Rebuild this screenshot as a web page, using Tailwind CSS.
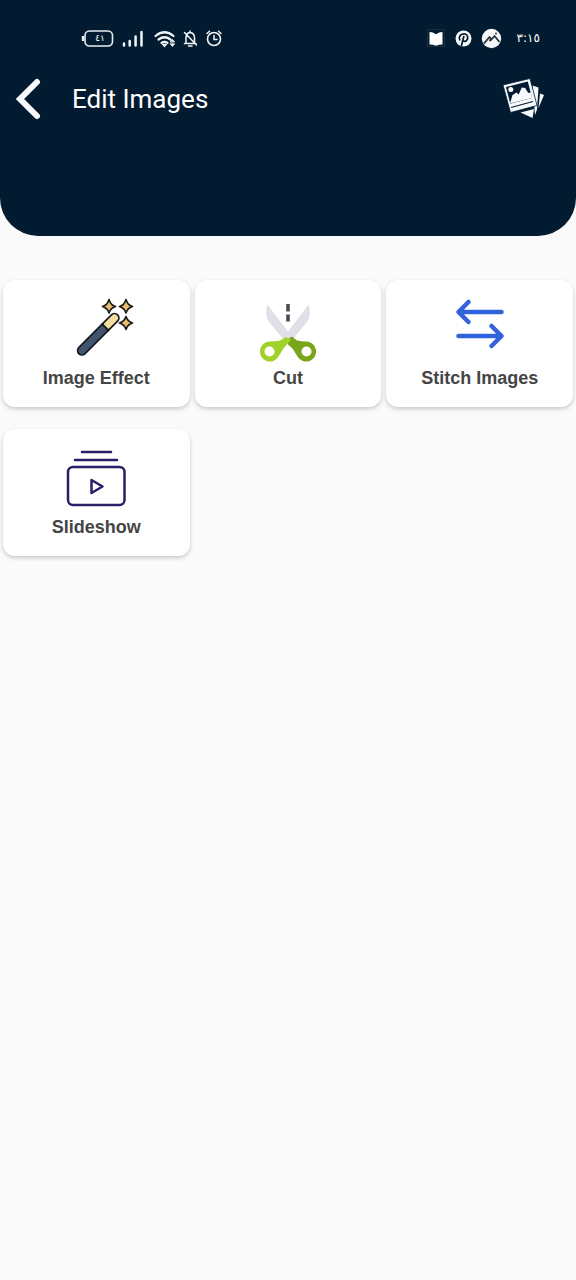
<!DOCTYPE html>
<html lang="en">
<head>
<meta charset="utf-8">
<meta name="viewport" content="width=device-width, initial-scale=1">
<title>Edit Images</title>
<script src="https://cdn.jsdelivr.net/npm/@tailwindcss/browser@4"></script>
</head>
<body class="min-h-screen bg-[#fafafa] font-['Liberation_Sans',sans-serif]">
<header class="rounded-b-[38px] bg-[#031b30] pt-6 pb-[113px] text-white">
  <div class="flex h-7 items-center justify-between pr-9 pl-20" aria-label="Status bar">
    <div class="flex items-center">
      <div class="relative h-7 w-9">
        <svg class="h-7 w-9" viewBox="80 24 36 28" fill="none"><rect x="85" y="31" width="27.500" height="15" rx="4.500" stroke="#e8eef2" stroke-width="1.600"/><path d="M83 36v5" stroke="#e8eef2" stroke-width="2.400"/></svg>
        <span class="absolute inset-0 flex items-center justify-center pl-1 font-['DejaVu_Sans',sans-serif] text-[9px] leading-none">٤١</span>
      </div>
      <svg class="h-7 w-28" viewBox="116 24 112 28" fill="none" stroke="#f1f5f7" stroke-linecap="round">
        <path d="M124 43.500v2M129.700 41v4.500M135.600 36.500v9M141.500 32v13.500" stroke-width="2.500"/>
        <path d="M155.500 36q9-7.500 18 0M158.500 39.500q6-4.500 12 0M161.500 42.800q3-2 6 0" stroke-width="2.200"/>
        <path d="M163 44.500h3l-1.500 1.800z" fill="#f1f5f7" stroke-width="1.500"/>
        <path d="M170.400 41.800l2-2.500 2 2.500zM170.400 44l2 2.500 2-2.500z" fill="#f1f5f7" stroke-width=".8"/>
        <path d="M184.500 43.500h11.500M186 43v-5q0-5 4-5.500 4.500.5 4.500 5.500v5M190 32v-1M188.500 46h3.500M184.500 32.500l12 12.500" stroke-width="1.500"/>
        <circle cx="214" cy="39" r="6.500" stroke-width="1.600"/><path d="M214 35.500V39.500h3M207 33.500l2.500-2.300M221 33.500l-2.500-2.300" stroke-width="1.500"/>
      </svg>
    </div>
    <div class="flex items-center gap-2">
      <svg class="h-7 w-20" viewBox="424 24 80 28" fill="none">
        <rect x="427.500" y="29.500" width="17" height="17" stroke="#1c2c3b"/><path d="M429.500 32q3.500 0 6.500 2.200 3-2.200 6.500-2.200v12.500q-3.500 0-6.500 1.200-3-1.200-6.500-1.200z" fill="#fff"/>
        <circle cx="463.500" cy="38.500" r="8" fill="#f6f8fa"/><path d="M459.800 39.800c-2.600-5.300 5.900-8.300 7.700-3.600.9 3.100-1.800 6.600-4 4.600M463.800 36.500l-2.300 9" stroke="#031b30" stroke-width="1.700" stroke-linecap="round"/>
        <circle cx="491.500" cy="38.500" r="9.700" fill="#f6f8fa"/><path d="M484 43.500l5.500-6.500 2 2.500 3-3.500 5 6M489.500 41l2-2" stroke="#26343f" stroke-width="1.900" stroke-linejoin="round"/><circle cx="496" cy="33.500" r="1" fill="#26343f"/>
      </svg>
      <time class="w-7 text-right font-['DejaVu_Sans',sans-serif] text-[12px] leading-4">٣:١٥</time>
    </div>
  </div>
  <div class="mt-[23px] flex h-12 items-center pr-7">
    <button type="button" aria-label="Back" class="h-12 w-[72px] shrink-0">
      <svg class="h-12 w-12" viewBox="0 75 48 48" fill="none"><path d="M37 82L20 99l17 17" stroke="#f7fafc" stroke-width="6" stroke-linecap="round" stroke-linejoin="miter"/></svg>
    </button>
    <h1 class="grow font-[Roboto,sans-serif] text-[26px] leading-8 font-normal">Edit Images</h1>
    <button type="button" aria-label="Gallery" class="h-12 w-12 shrink-0">
      <svg class="h-12 w-12" viewBox="500 75 48 48" fill="none">
        <path d="M520.500 112.500l13.500-3.500-1.500 9z" fill="#f7fafc"/>
        <path d="M532.500 85.500l6 2-1.500 22-2 5.500z" fill="#f7fafc"/>
        <path d="M540 93.500l4 1.500-5.500 13z" fill="#f7fafc"/>
        <path d="M503 85L530 78.500l7 27-26.500 7z" fill="#f7fafc" stroke="#031b30" stroke-width=".8"/>
        <path d="M506 87l21.800-5.500 4.300 16.500-21.800 5.800z" fill="#031b30"/>
        <circle cx="510.800" cy="89.500" r="2.500" fill="#f7fafc"/>
        <path d="M510 103.500l2.500-8.500 4-2.500 2.200 2 3-7 3.500.5 3 5 2.500-.5 1.500 5.500z" fill="#f7fafc"/>
        <path d="M511 107.500l22-6" stroke="#031b30" stroke-width="1.200"/>
      </svg>
    </button>
  </div>
</header>
<main class="grid grid-cols-3 gap-x-[5px] gap-y-[22px] px-[3px] pt-11">
  <button type="button" class="flex flex-col items-center rounded-xl bg-white pt-3 pb-[15px] text-[18px] leading-7 font-bold text-[#454545] shadow-[0_2px_4px_rgba(0,0,0,0.2)]">
    <svg class="h-[72px] w-20" viewBox="56 292 80 72" fill="none" aria-hidden="true">
      <path d="M82 350.500L114.500 318" stroke="#151a20" stroke-width="10.500" stroke-linecap="round"/>
      <path d="M82 350.500L104.500 328" stroke="#43546f" stroke-width="7" stroke-linecap="round"/>
      <path d="M107 325.500l7.500-7.500" stroke="#f4dfa0" stroke-width="7" stroke-linecap="round"/>
      <path d="M101.500 323.500l7.500 7.500" stroke="#151a20" stroke-width="2"/>
      <g fill="#e9bd6c" stroke="#1b1b1b" stroke-width="1.700" stroke-linejoin="round"><path d="M109 299.500q1.500 5.500 6.500 7-5 1.500-6.500 6.500-1.500-5-6.500-6.500 5-1.500 6.500-7z"/><path d="M126 299.500q1.500 5.500 6.500 7-5 1.500-6.500 6.500-1.500-5-6.500-6.500 5-1.500 6.500-7z"/><path d="M126 316.500q1.500 5 6.500 6.500-5 1.500-6.500 6.500-1.500-5-6.500-6.500 5-1.500 6.500-6.500z"/></g>
    </svg>
    <span>Image Effect</span>
  </button>
  <button type="button" class="flex flex-col items-center rounded-xl bg-white pt-3 pb-[15px] text-[18px] leading-7 font-bold text-[#454545] shadow-[0_2px_4px_rgba(0,0,0,0.2)]">
    <svg class="h-[72px] w-20" viewBox="248 292 80 72" fill="none" aria-hidden="true">
      <path d="M267.500 304.500L292 337l-4 5-4-2-15-18q-5-8-1.500-17.500z" fill="#dfe0e8"/>
      <path d="M308.500 304.500L284 337l4 5 4-2 15-18q5-8 1.500-17.500z" fill="#dfe0e8"/>
      <path d="M288 339l4-2.500 5 4q4 1 9 1a10 10 0 1 1-8.500 15l-5-8-4.500-4z" fill="#78a51c"/>
      <path d="M291 340l-5-3-6 3.500q-5 1-10 1a10 10 0 1 0 8.500 15l5-8z" fill="#a1d22b"/>
      <circle cx="269.500" cy="351.500" r="5" fill="#fff"/><circle cx="306.500" cy="351.500" r="5" fill="#fff"/>
      <path d="M288 304v7.500M288 314.500v7" stroke="#4b4b55" stroke-width="3.600"/>
    </svg>
    <span>Cut</span>
  </button>
  <button type="button" class="flex flex-col items-center rounded-xl bg-white pt-3 pb-[15px] text-[18px] leading-7 font-bold text-[#454545] shadow-[0_2px_4px_rgba(0,0,0,0.2)]">
    <svg class="h-[72px] w-20" viewBox="440 292 80 72" fill="none" stroke="#3262dc" stroke-width="4.500" stroke-linecap="round" stroke-linejoin="round" aria-hidden="true"><path d="M501.500 312h-43M468.500 302l-10 10 10 10M458.500 336h43M491.500 326l10 10-10 10"/></svg>
    <span>Stitch Images</span>
  </button>
  <button type="button" class="flex flex-col items-center rounded-xl bg-white pt-3 pb-[15px] text-[18px] leading-7 font-bold text-[#454545] shadow-[0_2px_4px_rgba(0,0,0,0.2)]">
    <svg class="h-[72px] w-20" viewBox="56 441 80 72" fill="none" stroke="#2a1f66" stroke-width="2.500" stroke-linecap="round" stroke-linejoin="round" aria-hidden="true"><path d="M82 452h29M75 460h42"/><rect x="68" y="467" width="56.500" height="38" rx="5"/><path d="M91.500 480v13l11-6.500z"/></svg>
    <span>Slideshow</span>
  </button>
</main>
</body>
</html>
